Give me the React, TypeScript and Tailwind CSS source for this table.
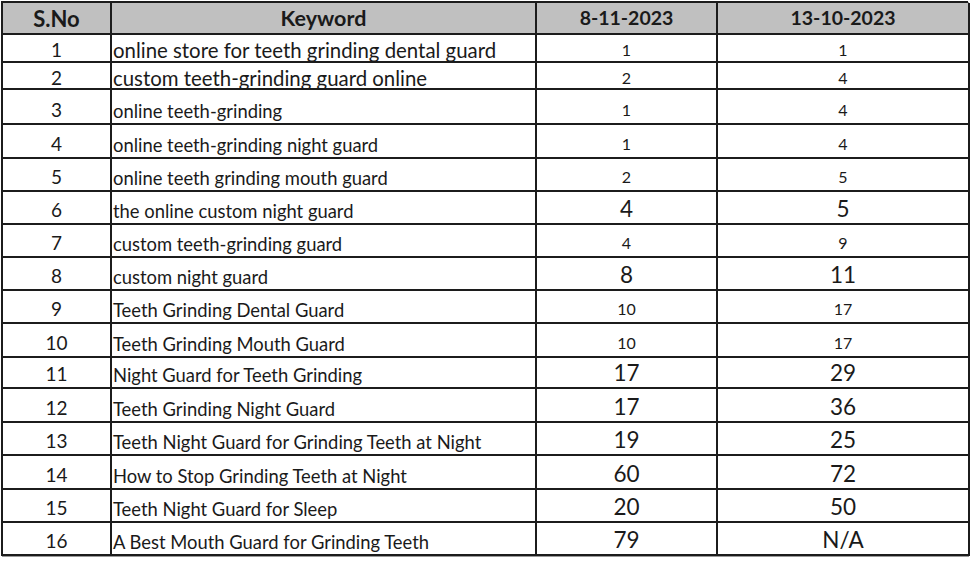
import React from "react";

type Row = {
  n: string;
  k: string;
  a: string;
  b: string;
  h: string;
  kBig?: boolean;
  numBig?: boolean;
};

const rows: Row[] = [
  { n: "1", k: "online store for teeth grinding dental guard", a: "1", b: "1", h: "h-[28px]", kBig: true },
  { n: "2", k: "custom teeth-grinding guard online", a: "2", b: "4", h: "h-[27px]", kBig: true },
  { n: "3", k: "online teeth-grinding", a: "1", b: "4", h: "h-[35px]" },
  { n: "4", k: "online teeth-grinding night guard", a: "1", b: "4", h: "h-[34px]" },
  { n: "5", k: "online teeth grinding mouth guard", a: "2", b: "5", h: "h-[33px]" },
  { n: "6", k: "the online custom night guard", a: "4", b: "5", h: "h-[33px]", numBig: true },
  { n: "7", k: "custom teeth-grinding guard", a: "4", b: "9", h: "h-[33px]" },
  { n: "8", k: "custom night guard", a: "8", b: "11", h: "h-[33px]", numBig: true },
  { n: "9", k: "Teeth Grinding Dental Guard", a: "10", b: "17", h: "h-[33px]" },
  { n: "10", k: "Teeth Grinding Mouth Guard", a: "10", b: "17", h: "h-[34px]" },
  { n: "11", k: "Night Guard for Teeth Grinding", a: "17", b: "29", h: "h-[31px]", numBig: true },
  { n: "12", k: "Teeth Grinding Night Guard", a: "17", b: "36", h: "h-[34px]", numBig: true },
  { n: "13", k: "Teeth Night Guard for Grinding Teeth at Night", a: "19", b: "25", h: "h-[33px]", numBig: true },
  { n: "14", k: "How to Stop Grinding Teeth at Night", a: "60", b: "72", h: "h-[34px]", numBig: true },
  { n: "15", k: "Teeth Night Guard for Sleep", a: "20", b: "50", h: "h-[33px]", numBig: true },
  { n: "16", k: "A Best Mouth Guard for Grinding Teeth", a: "79", b: "N/A", h: "h-[33px]", numBig: true },
];

const base = "border-r-2 border-b-2 border-[#1c1c1c] flex whitespace-nowrap";
const head = "border-r-2 border-b-2 border-[#1c1c1c] flex items-center justify-center whitespace-nowrap h-[32px] bg-[#c0c0c0] font-bold";

export default function App() {
  return (
    <div className="w-[979px] h-[568px] bg-white pl-[1px] pt-[1px] text-[#1a1a1a]" style={{ fontFamily: "Lato, 'Open Sans', sans-serif" }}>
      <div className="grid grid-cols-[109px_425px_181px_252px] w-[967px] border-l-2 border-t-2 border-[#1c1c1c] shadow-[1px_1px_0_#9a9a9a]">
        <div className={`${head} text-[22px]`}>S.No</div>
        <div className={`${head} text-[21.5px]`}>Keyword</div>
        <div className={`${head} text-[19.5px]`}>8-11-2023</div>
        <div className={`${head} text-[19.5px]`}>13-10-2023</div>
        {rows.map((r) => {
          const tight = r.kBig;
          const cell = `${base} ${r.h} ${tight ? "items-center pt-[4px]" : "items-end"}`;
          const numCls = r.numBig
            ? "text-[22.5px] leading-[26px] pb-[1px]"
            : tight
            ? "text-[16px] leading-[20px]"
            : "text-[16px] leading-[20px] pb-[3px]";
          return (
            <React.Fragment key={r.n}>
              <div className={`${cell} justify-center text-[19px] leading-[22px] ${tight ? "" : "pb-[2px]"}`}>{r.n}</div>
              <div className={`${cell} pl-[1px] ${tight ? "text-[20.4px] leading-[24px]" : "text-[18.4px] leading-[22px] pb-[1px]"}`}>{r.k}</div>
              <div className={`${cell} justify-center ${numCls}`}>{r.a}</div>
              <div className={`${cell} justify-center ${numCls}`}>{r.b}</div>
            </React.Fragment>
          );
        })}
      </div>
    </div>
  );
}
